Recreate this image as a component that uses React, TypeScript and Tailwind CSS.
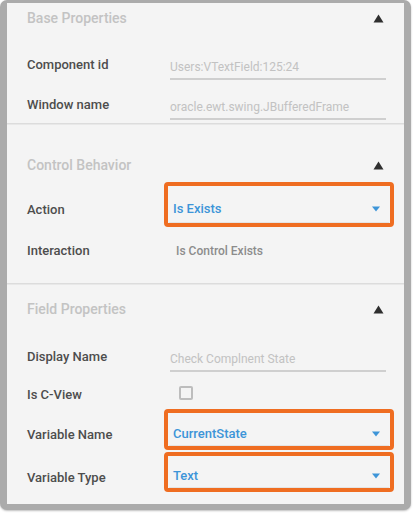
import React from 'react';

const Caret = () => (
  <svg width="10" height="6" viewBox="0 0 10 6" className="shrink-0">
    <path d="M1 0.5h8L5 5.5z" fill="#3d95d8" />
  </svg>
);

const Header = ({ title, className }: { title: string; className: string }) => (
  <div className={`flex items-center justify-between pl-[20px] pr-[20px] ${className}`}>
    <span className="text-[14px] font-medium text-[#c3c3c3]">{title}</span>
    <svg width="11" height="9" viewBox="0 0 11 9">
      <path d="M5.5 0.5L10.5 8.5H0.5z" fill="#2f2f2f" />
    </svg>
  </div>
);

const Label = ({ text, className = '' }: { text: string; className?: string }) => (
  <div className={`shrink-0 text-[13px] font-medium text-[#4d4d4d] ${className}`}>{text}</div>
);

const TextRow = ({ label, value }: { label: string; value: string }) => (
  <div className="flex items-center h-[40px] pl-[20px] pr-[18px]">
    <Label text={label} className="w-[143px]" />
    <div className="flex-1 pt-[11px] pb-[5px] border-b-2 border-[#cfcfcf] text-[12px] text-[#c2c2c2] leading-none whitespace-nowrap">
      {value}
    </div>
  </div>
);

const SelectRow = ({ label, value, className = '' }: { label: string; value: string; className?: string }) => (
  <div className={`flex items-center pl-[20px] pr-[10px] ${className}`}>
    <Label text={label} className="w-[137px] pt-[11px]" />
    <div className="flex-1 self-stretch border-4 border-[#ef6d21] rounded-[4px] px-[1px] flex flex-col">
      <div className="flex-1 flex items-center justify-between pl-[4px] pr-[8px] pt-[9px] border-b border-[#e4e4e4]">
        <span className="text-[13px] font-medium text-[#3d95d8]">{value}</span>
        <Caret />
      </div>
    </div>
  </div>
);

export default function App() {
  return (
    <div className="w-[413px] h-[513px] bg-white" style={{ fontFamily: 'Roboto, "Noto Sans", sans-serif' }}>
      <div className="w-[411px] h-[510px] bg-[#ababab] rounded-[7px] pt-[3px] pl-[7px] pr-[7px] pb-[6px] shadow-[0_1px_2px_rgba(0,0,0,0.25)]">
        <div className="h-full bg-[#f4f4f4] flex flex-col">
          {/* Base Properties */}
          <section className="h-[121px] border-b border-[#dcdcdc]">
            <Header title="Base Properties" className="h-[30px]" />
            <div className="mt-[12px]">
              <TextRow label="Component id" value="Users:VTextField:125:24" />
              <TextRow label="Window name" value="oracle.ewt.swing.JBufferedFrame" />
            </div>
          </section>

          {/* Control Behavior */}
          <section className="h-[160px] border-t border-[#e8e8e8] border-b border-b-[#dcdcdc] pt-[25px]">
            <Header title="Control Behavior" className="h-[30px]" />
            <SelectRow label="Action" value="Is Exists" className="h-[45px] mt-[2px]" />
            <div className="flex items-center h-[44px] pl-[20px] pt-[4px]">
              <Label text="Interaction" className="w-[143px]" />
              <span className="pl-[6px] text-[12px] font-medium text-[#8c8c8c]">Is Control Exists</span>
            </div>
          </section>

          {/* Field Properties */}
          <section className="flex-1 border-t border-[#e8e8e8] pt-[9px]">
            <Header title="Field Properties" className="h-[30px]" />
            <div className="mt-[13px]">
              <TextRow label="Display Name" value="Check Complnent State" />
            </div>
            <div className="flex items-center h-[32px] pl-[20px]">
              <Label text="Is C-View" className="w-[143px] pt-[4px]" />
              <div className="ml-[9px] w-[14px] h-[14px] border-2 border-[#bdbdbd] rounded-[2px]" />
            </div>
            <SelectRow label="Variable Name" value="CurrentState" className="h-[41px]" />
            <SelectRow label="Variable Type" value="Text" className="h-[40px] mt-[2px]" />
          </section>
        </div>
      </div>
    </div>
  );
}
